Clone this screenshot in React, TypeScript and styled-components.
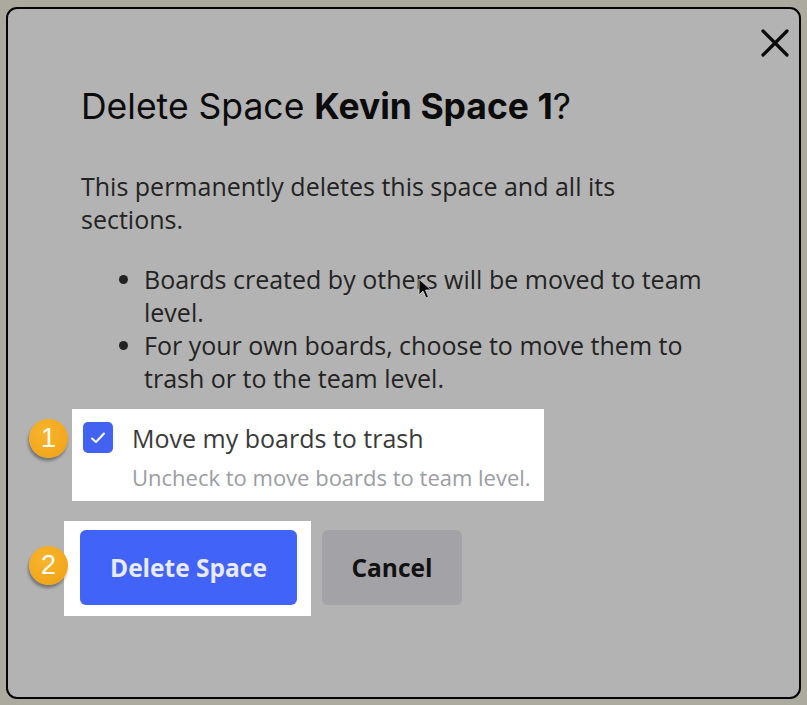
import styled, { createGlobalStyle } from "styled-components";

const GlobalStyle = createGlobalStyle`
  html, body {
    margin: 0;
    padding: 0;
    background: #aca99f;
  }
  body {
    padding: 7px 6px 6px 6px;
    font-family: "Open Sans", "Noto Sans", sans-serif;
  }
`;

const Modal = styled.div`
  position: relative;
  box-sizing: border-box;
  width: 795px;
  height: 692px;
  border: 2px solid #050505;
  border-radius: 11px;
  background: #b3b3b3;
  padding: 20px 10px 0 73px;
`;

const Header = styled.div`
  display: flex;
  justify-content: flex-end;
  height: 28px;
`;

const CloseButton = styled.button`
  display: flex;
  align-items: center;
  justify-content: center;
  width: 28px;
  height: 28px;
  padding: 0;
  border: none;
  background: none;
  color: #0a0a0a;
`;

const Title = styled.h1`
  margin: 29px 0 42px;
  font-family: Inter, "Liberation Sans", sans-serif;
  font-size: 35.5px;
  line-height: 42px;
  font-weight: 400;
  color: #0b0b0b;

  b {
    font-weight: 700;
  }
`;

const Body = styled.div`
  max-width: 632px;
  font-size: 25px;
  line-height: 33px;
  color: #232323;
`;

const Para = styled.p`
  margin: 0 0 27px;
`;

const Bullets = styled.ul`
  margin: 0;
  padding-left: 63px;
`;

const Highlight = styled.div<{ $shift: number }>`
  position: relative;
  background: #ffffff;
  margin-left: -${(p) => p.$shift}px;
`;

const OptionBox = styled(Highlight)`
  width: fit-content;
  margin-top: 14px;
  padding: 13px 13px 11px 11px;
`;

const CheckRow = styled.label`
  display: flex;
  align-items: center;
  gap: 19px;
  font-size: 25px;
  line-height: 30px;
  color: #3a3a3a;
`;

const CheckBox = styled.span`
  display: flex;
  align-items: center;
  justify-content: center;
  width: 30px;
  height: 31px;
  border-radius: 5px;
  background: #4362f2;
`;

const Hint = styled.div`
  margin: 11px 0 0 49px;
  font-size: 22px;
  line-height: 26px;
  color: #9c9ca4;
`;

const Actions = styled.div`
  display: flex;
  align-items: flex-start;
  gap: 11px;
  margin-top: 20px;
`;

const ButtonBox = styled(Highlight)`
  padding: 9px 14px 11px 16px;
`;

const Button = styled.button<{ $primary?: boolean }>`
  height: 75px;
  padding: 0 30px;
  border: none;
  border-radius: 6px;
  font-family: "Open Sans", "Noto Sans", sans-serif;
  font-size: 24.5px;
  font-weight: 700;
  background: ${(p) => (p.$primary ? "#4263f7" : "#a3a3a7")};
  color: ${(p) => (p.$primary ? "#e8eaff" : "#111111")};
`;

const CancelButton = styled(Button)`
  width: 140px;
  padding: 0;
  margin-top: 9px;
`;

const Badge = styled.span<{ $left: number; $top: number }>`
  position: absolute;
  left: ${(p) => p.$left}px;
  top: ${(p) => p.$top}px;
  display: flex;
  align-items: center;
  justify-content: center;
  width: 39px;
  height: 39px;
  border-radius: 50%;
  background: radial-gradient(circle at 40% 35%, #f8b52c, #f0a014);
  box-shadow: -1px 3px 3px rgba(0, 0, 0, 0.35);
  font-family: "Liberation Sans", Arial, sans-serif;
  font-size: 27px;
  color: #ffffff;
`;

const Cursor = styled.svg`
  position: absolute;
  left: 410px;
  top: 269px;
`;

export default function App() {
  return (
    <>
      <GlobalStyle />
      <Modal>
        <Header>
          <CloseButton aria-label="Close">
            <svg width="28" height="28" viewBox="0 0 28 28">
              <path d="M2 2 L26 26 M26 2 L2 26" stroke="currentColor" strokeWidth="3.2" strokeLinecap="round" />
            </svg>
          </CloseButton>
        </Header>
        <Title>
          Delete Space <b>Kevin Space 1</b>?
        </Title>
        <Body>
          <Para>This permanently deletes this space and all its sections.</Para>
          <Bullets>
            <li>Boards created by others will be moved to team level.</li>
            <li>For your own boards, choose to move them to trash or to the team level.</li>
          </Bullets>
        </Body>
        <OptionBox $shift={9}>
          <Badge $left={-43} $top={10}>1</Badge>
          <CheckRow>
            <CheckBox>
              <svg width="18" height="16" viewBox="0 0 18 16">
                <path d="M3 8.5 L7 12 L15 3.5" fill="none" stroke="#fff" strokeWidth="2" strokeLinecap="round" strokeLinejoin="round" />
              </svg>
            </CheckBox>
            Move my boards to trash
          </CheckRow>
          <Hint>Uncheck to move boards to team level.</Hint>
        </OptionBox>
        <Actions>
          <ButtonBox $shift={17}>
            <Badge $left={-35} $top={25}>2</Badge>
            <Button $primary>Delete Space</Button>
          </ButtonBox>
          <CancelButton>Cancel</CancelButton>
        </Actions>
        <Cursor width="14" height="22" viewBox="0 0 14 22">
          <path d="M1 1 L1 17 L5 13 L8 20 L10.5 19 L7.5 12 L13 12 Z" fill="#0a0a0a" stroke="#d8d8d8" strokeWidth="0.8" />
        </Cursor>
      </Modal>
    </>
  );
}
